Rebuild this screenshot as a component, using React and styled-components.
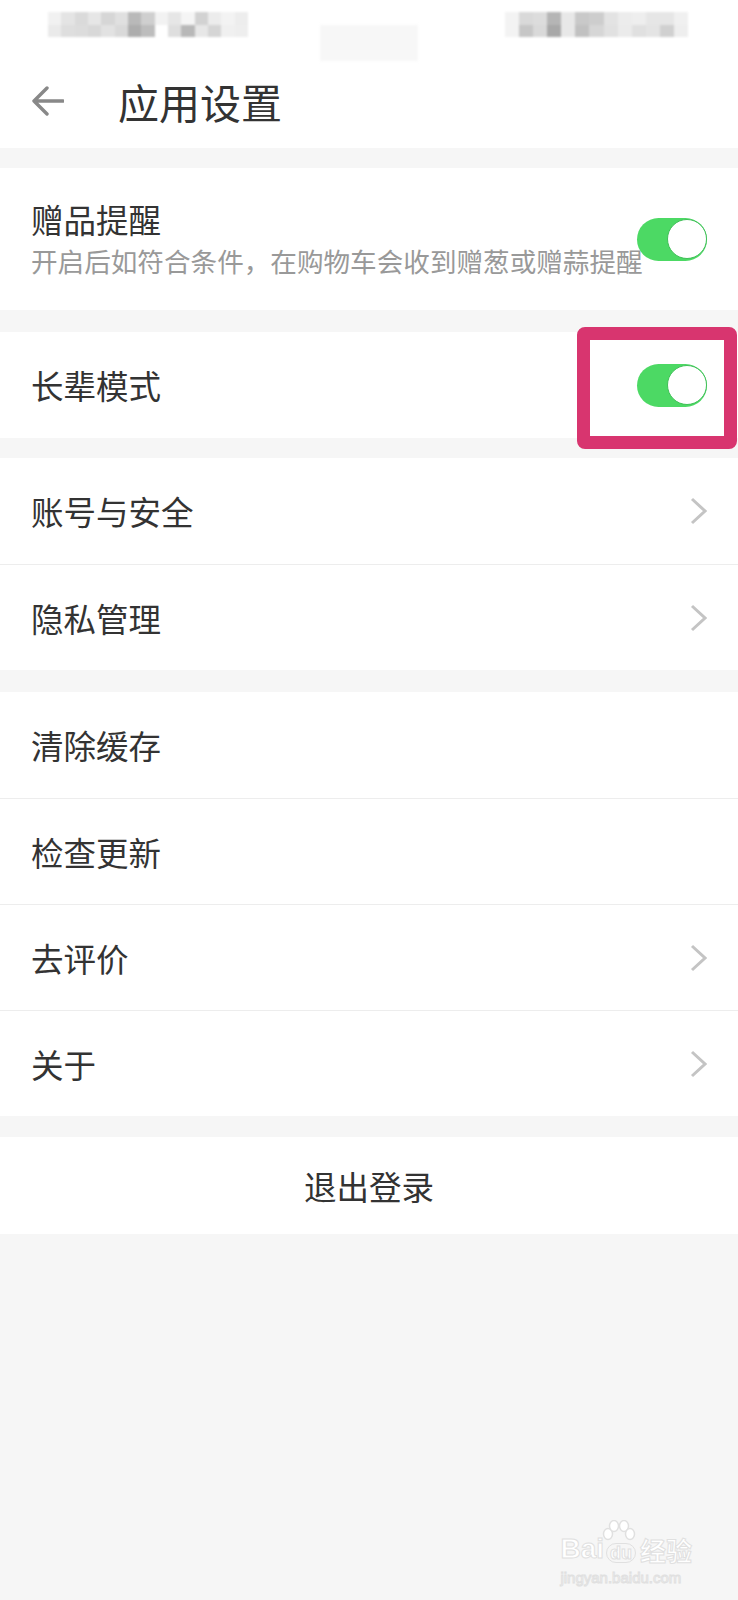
import styled, { createGlobalStyle } from "styled-components";

const GlobalStyle = createGlobalStyle`
  body {
    margin: 0;
    background: #f6f6f6;
    font-family: "Noto Sans CJK SC", "Noto Sans", sans-serif;
  }
`;

const Page = styled.div`
  position: relative;
  width: 738px;
  min-height: 1600px;
  background: #f6f6f6;
  overflow: hidden;
`;

const TopBar = styled.header`
  background: #fff;
`;

const StatusBar = styled.div`
  display: flex;
  align-items: flex-start;
  height: 54px;
  padding: 12px 0 0 48px;
  box-sizing: border-box;
`;

const Mosaic = styled.div`
  display: grid;
  grid-template-columns: repeat(${(p) => p.$cols}, 1fr);
  width: ${(p) => p.$width}px;
  height: 25px;
  margin-left: ${(p) => p.$offset || 0}px;
  filter: blur(1px);
`;

const Cell = styled.span`
  background: ${(p) => p.$shade};
`;

const FaintBlock = styled.div`
  width: 98px;
  height: 36px;
  margin: 13px 0 0 72px;
  background: #f7f7f7;
  filter: blur(1.5px);
`;

const NavBar = styled.div`
  display: flex;
  align-items: center;
  height: 94px;
  padding-left: 31px;
  gap: 54px;
`;

const Title = styled.h1`
  margin: 0;
  font-size: 41px;
  font-weight: 400;
  color: #333;
  line-height: 1;
`;

const Section = styled.section`
  position: relative;
  margin-top: ${(p) => p.$gap}px;
  background: #fff;
`;

const Row = styled.div`
  display: flex;
  align-items: center;
  justify-content: space-between;
  height: ${(p) => p.$height || 106}px;
  padding: 0 31px;
  box-sizing: border-box;

  & + & {
    border-top: 1px solid #ededed;
  }
`;

const TextBlock = styled.div`
  display: flex;
  flex-direction: column;
  flex: 1;
  min-width: 0;
  gap: 4px;
`;

const Label = styled.span`
  font-size: 32.5px;
  color: #333;
  line-height: 40px;
`;

const Hint = styled.span`
  font-size: 26.6px;
  color: #999;
  line-height: 36px;
  white-space: nowrap;
`;

const Switch = styled.div`
  position: relative;
  z-index: 1;
  display: flex;
  justify-content: flex-end;
  flex-shrink: 0;
  width: 70px;
  height: 43px;
  border-radius: 22px;
  background: #4cd964;
`;

const Knob = styled.span`
  width: 40px;
  height: 40px;
  margin-top: 1.5px;
  border-radius: 50%;
  background: #fff;
  box-sizing: border-box;
  border: 1.5px solid #3fbf57;
`;

const Highlight = styled.div`
  position: absolute;
  top: -5px;
  right: 1px;
  width: 160px;
  height: 122px;
  border: 13px solid #d8356f;
  border-radius: 8px;
  box-sizing: border-box;
  pointer-events: none;
`;

const LogoutRow = styled.button`
  display: block;
  width: 100%;
  height: 97px;
  border: 0;
  background: #fff;
  font-family: inherit;
  font-size: 32.5px;
  color: #333;
`;

const Watermark = styled.div`
  position: absolute;
  right: 46px;
  bottom: 14px;
  display: flex;
  flex-direction: column;
  align-items: flex-start;
  color: #fff;
  -webkit-text-stroke: 1px #e0e0e0;
  font-family: "Liberation Sans", sans-serif;
`;

const MarkTop = styled.div`
  display: flex;
  align-items: flex-end;
  font-size: 28px;
  font-weight: 700;
  line-height: 1;
`;

const DuBadge = styled.span`
  position: relative;
  margin: 0 2px;
  padding: 0 3px;
  border: 1.5px solid #e0e0e0;
  border-radius: 10px;
  font-size: 18px;
`;

const CnMark = styled.span`
  font-family: "Noto Sans CJK SC", sans-serif;
  font-size: 26px;
  margin-left: 2px;
`;

const MarkUrl = styled.span`
  font-size: 15px;
  margin-top: 6px;
`;

const leftShades = [
  "#f1f1f1", "#e4e4e4", "#dadada", "#e6e6e6", "#d6d6d6", "#e0e0e0", "#b9b9b9", "#cfcfcf", "#f2f2f2", "#e6e6e6", "#f5f5f5", "#d2d2d2", "#ececec", "#f3f3f3", "#ededed",
  "#eaeaea", "#dedede", "#dcdcdc", "#d8d8d8", "#e2e2e2", "#d9d9d9", "#adadad", "#bdbdbd", "#ffffff", "#dedede", "#b8b8b8", "#e7e7e7", "#d5d5d5", "#f0f0f0", "#eeeeee",
];

const rightShades = [
  "#f3f3f3", "#d9d9d9", "#dcdcdc", "#b5b5b5", "#e8e8e8", "#c9c9c9", "#cdcdcd", "#e3e3e3", "#ececec", "#eeeeee", "#e6e6e6", "#e6e6e6", "#f0f0f0",
  "#f3f3f3", "#c6c6c6", "#d9d9d9", "#a8a8a8", "#e8e8e8", "#c1c1c1", "#d6d6d6", "#e1e1e1", "#ebebeb", "#e0e0e0", "#e4e4e4", "#d0d0d0", "#eeeeee",
];

function BackArrow() {
  return (
    <svg width="33" height="30" viewBox="0 0 33 30">
      <path
        d="M32 15 H3 M16 2 L3 15 L16 28"
        fill="none"
        stroke="#888"
        strokeWidth="3.4"
        strokeLinecap="round"
        strokeLinejoin="round"
      />
    </svg>
  );
}

function Chevron() {
  return (
    <svg width="17" height="28" viewBox="0 0 17 28">
      <path d="M2 2 L15 14 L2 26" fill="none" stroke="#c4c4c4" strokeWidth="3" />
    </svg>
  );
}

function Toggle() {
  return (
    <Switch>
      <Knob />
    </Switch>
  );
}

function Paw() {
  return (
    <svg width="34" height="26" viewBox="0 0 34 26" style={{ position: "absolute", left: "-5px", top: "-24px" }}>
      {[[6, 14], [12, 6], [22, 6], [28, 14]].map(([cx, cy]) => (
        <ellipse key={cx} cx={cx} cy={cy} rx="4.5" ry="5.5" fill="#fff" stroke="#e0e0e0" strokeWidth="1.5" />
      ))}
    </svg>
  );
}

const accountItems = ["账号与安全", "隐私管理"];
const generalItems = [
  { label: "清除缓存" },
  { label: "检查更新" },
  { label: "去评价", arrow: true },
  { label: "关于", arrow: true },
];

function App() {
  return (
    <Page>
      <GlobalStyle />
      <TopBar>
        <StatusBar>
          <Mosaic $cols={15} $width={200}>
            {leftShades.map((s, i) => (
              <Cell key={i} $shade={s} />
            ))}
          </Mosaic>
          <FaintBlock />
          <Mosaic $cols={13} $width={183} $offset={87}>
            {rightShades.map((s, i) => (
              <Cell key={i} $shade={s} />
            ))}
          </Mosaic>
        </StatusBar>
        <NavBar>
          <BackArrow />
          <Title>应用设置</Title>
        </NavBar>
      </TopBar>

      <Section $gap={20}>
        <Row $height={142}>
          <TextBlock>
            <Label>赠品提醒</Label>
            <Hint>开启后如符合条件，在购物车会收到赠葱或赠蒜提醒</Hint>
          </TextBlock>
          <Toggle />
        </Row>
      </Section>

      <Section $gap={22}>
        <Row>
          <Label>长辈模式</Label>
          <Toggle />
        </Row>
        <Highlight />
      </Section>

      <Section $gap={20}>
        {accountItems.map((label) => (
          <Row key={label}>
            <Label>{label}</Label>
            <Chevron />
          </Row>
        ))}
      </Section>

      <Section $gap={22}>
        {generalItems.map((item) => (
          <Row key={item.label}>
            <Label>{item.label}</Label>
            {item.arrow && <Chevron />}
          </Row>
        ))}
      </Section>

      <Section $gap={21}>
        <LogoutRow>退出登录</LogoutRow>
      </Section>

      <Watermark>
        <MarkTop>
          Bai
          <DuBadge>
            <Paw />
            du
          </DuBadge>
          <CnMark>经验</CnMark>
        </MarkTop>
        <MarkUrl>jingyan.baidu.com</MarkUrl>
      </Watermark>
    </Page>
  );
}

export default App;
